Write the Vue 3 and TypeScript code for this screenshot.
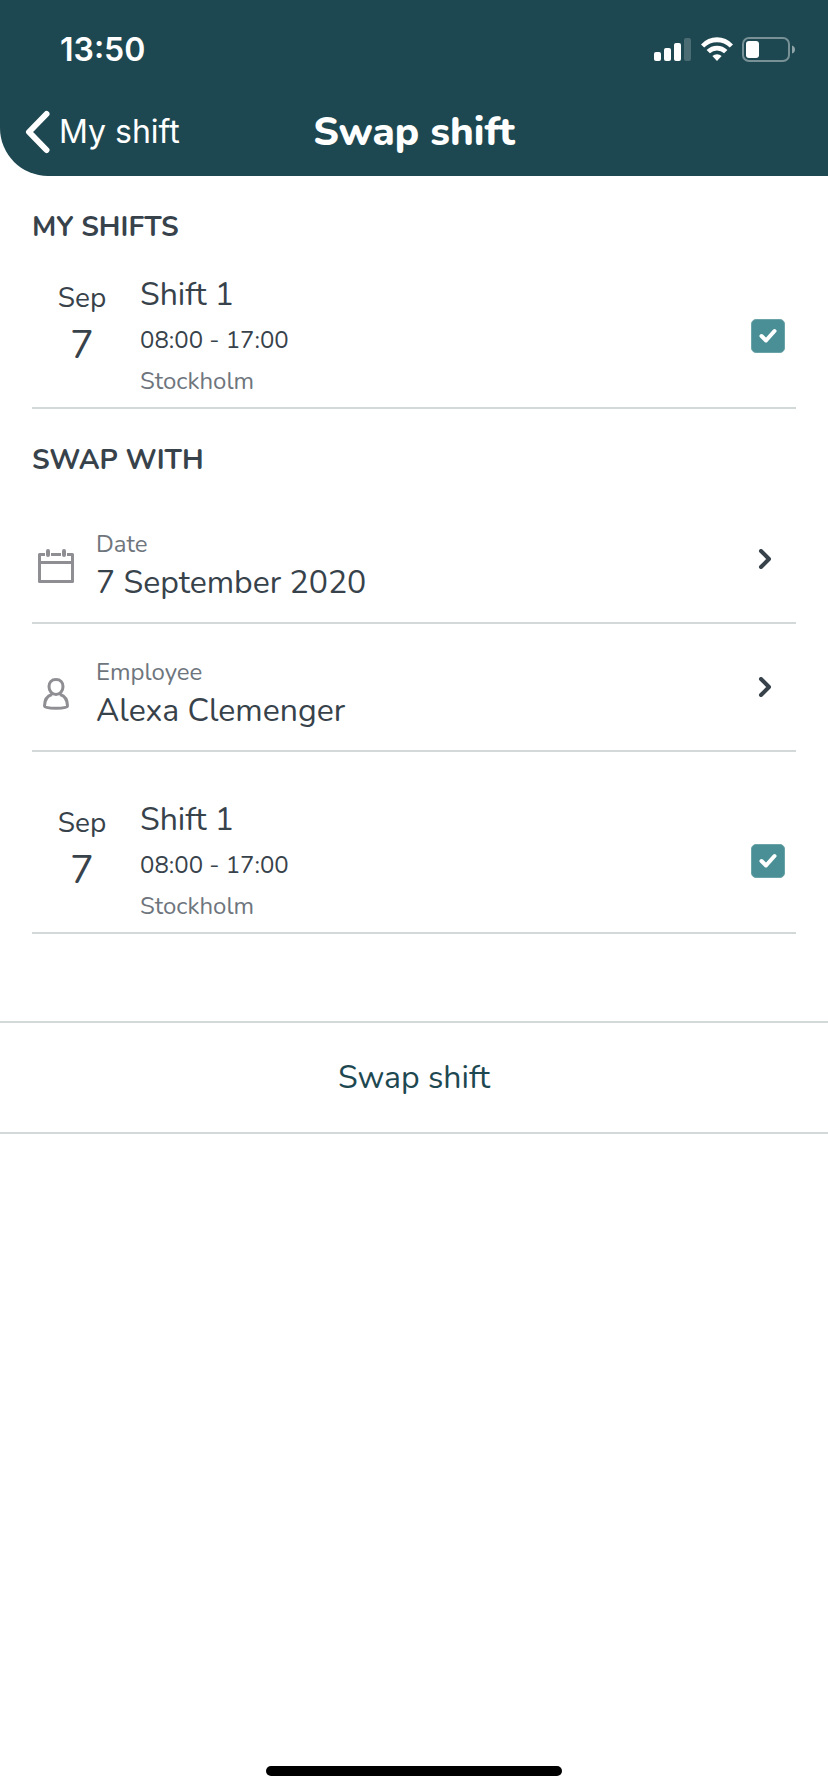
<script setup lang="ts">
import { reactive } from 'vue'

interface Shift {
  id: string
  month: string
  day: number
  title: string
  time: string
  place: string
  selected: boolean
}

interface Field {
  id: 'date' | 'employee'
  label: string
  value: string
}

const myShifts = reactive<Shift[]>([
  { id: 'mine-1', month: 'Sep', day: 7, title: 'Shift 1', time: '08:00 - 17:00', place: 'Stockholm', selected: true },
])

const otherShifts = reactive<Shift[]>([
  { id: 'other-1', month: 'Sep', day: 7, title: 'Shift 1', time: '08:00 - 17:00', place: 'Stockholm', selected: true },
])

const fields: Field[] = [
  { id: 'date', label: 'Date', value: '7 September 2020' },
  { id: 'employee', label: 'Employee', value: 'Alexa Clemenger' },
]
</script>

<template>
  <div class="screen">
    <header class="top">
      <div class="status">
        <span class="clock">13:50</span>
        <div class="indicators">
          <svg width="38" height="26" viewBox="0 0 38 26" fill="#fff" aria-hidden="true">
            <rect x="0" y="15" width="7" height="9" rx="2" />
            <rect x="10" y="11" width="7" height="13" rx="2" />
            <rect x="20" y="6" width="7" height="18" rx="2" />
            <rect x="30" y="1" width="7" height="23" rx="2" opacity="0.2" />
          </svg>
          <svg width="32" height="26" viewBox="0 0 32 26" fill="#fff" aria-hidden="true">
            <path d="M0 7.4Q6.8 0.3 16 0.3T32 7.4L28.8 10.6Q23.4 5.2 16 5.2T3.2 10.6Z" />
            <path d="M5.6 13.1Q10 8.8 16 8.8T26.4 13.1L23.1 16.3Q20 13.5 16 13.5T8.9 16.3Z" />
            <path d="M11.4 19Q13.3 17.2 16 17.2T20.6 19L16 24Z" />
          </svg>
          <svg width="54" height="26" viewBox="0 0 54 26" aria-hidden="true">
            <rect x="1" y="1" width="46" height="23" rx="6" fill="none" stroke="#fff" stroke-width="2" opacity="0.4" />
            <rect x="4" y="4" width="13" height="17" rx="3" fill="#fff" />
            <path d="M50 8.5Q53 9.5 53 12.5T50 16.5Z" fill="#fff" opacity="0.5" />
          </svg>
        </div>
      </div>
      <nav class="nav">
        <button class="back" type="button">
          <svg width="26" height="44" viewBox="0 0 26 44" fill="none" stroke="#fff" stroke-width="6" stroke-linecap="round" stroke-linejoin="round" aria-hidden="true">
            <path d="M22.5 4L5 22L22.5 40" />
          </svg>
          <span>My shift</span>
        </button>
        <h1 class="title">Swap shift</h1>
      </nav>
    </header>

    <main class="content">
      <section class="group">
        <h2 class="heading">MY SHIFTS</h2>
        <label v-for="shift in myShifts" :key="shift.id" class="shift" :for="shift.id">
          <span class="day">
            <span class="month">{{ shift.month }}</span>
            <span class="number">{{ shift.day }}</span>
          </span>
          <span class="details">
            <span class="name">{{ shift.title }}</span>
            <span class="line">{{ shift.time }}</span>
            <span class="line muted">{{ shift.place }}</span>
          </span>
          <span class="check">
            <input :id="shift.id" v-model="shift.selected" type="checkbox" />
            <svg viewBox="0 0 34 34" aria-hidden="true"><path d="M10.5 17L15 21.5L23.5 12" /></svg>
          </span>
        </label>
      </section>

      <section class="group">
        <h2 class="heading">SWAP WITH</h2>
        <div class="fields">
          <button v-for="field in fields" :key="field.id" class="field" type="button">
            <span class="field-main">
              <span class="field-icon">
                <svg v-if="field.id === 'date'" width="36" height="34" viewBox="0 0 36 34" fill="none" stroke="#8e8e93" stroke-width="3" stroke-linejoin="round" aria-hidden="true">
                  <path d="M7 5.5H1.5V32.5H34.5V5.5H29M13 5.5H23M1.5 13.5H34.5" />
                  <path d="M10 2V6M26 2V6" stroke-width="4" stroke-linecap="round" />
                </svg>
                <svg v-else width="26" height="32" viewBox="0 0 26 32" fill="none" stroke="#8e8e93" stroke-width="3" stroke-linejoin="round" aria-hidden="true">
                  <path d="M13 1.5C17.5 1.5 20 4.5 20 8.5C20 13 17 16.5 13 16.5S6 13 6 8.5C6 4.5 8.5 1.5 13 1.5Z" />
                  <path d="M9 16.5C4 18 1.5 22.5 1.5 28C1.5 29.5 6 30.3 13 30.3S24.5 29.5 24.5 28C24.5 22.5 22 18 17 16.5" />
                </svg>
              </span>
              <span class="field-text">
                <span class="field-label">{{ field.label }}</span>
                <span class="name">{{ field.value }}</span>
              </span>
            </span>
            <svg class="arrow" width="14" height="20" viewBox="0 0 14 20" fill="none" stroke="#37424b" stroke-width="4" stroke-linecap="round" stroke-linejoin="round" aria-hidden="true">
              <path d="M3 2L11 10L3 18" />
            </svg>
          </button>
        </div>
        <label v-for="shift in otherShifts" :key="shift.id" class="shift other" :for="shift.id">
          <span class="day">
            <span class="month">{{ shift.month }}</span>
            <span class="number">{{ shift.day }}</span>
          </span>
          <span class="details">
            <span class="name">{{ shift.title }}</span>
            <span class="line">{{ shift.time }}</span>
            <span class="line muted">{{ shift.place }}</span>
          </span>
          <span class="check">
            <input :id="shift.id" v-model="shift.selected" type="checkbox" />
            <svg viewBox="0 0 34 34" aria-hidden="true"><path d="M10.5 17L15 21.5L23.5 12" /></svg>
          </span>
        </label>
      </section>
    </main>

    <button class="submit" type="button">Swap shift</button>

    <footer class="home"><span class="home-bar"></span></footer>
  </div>
</template>

<style>
body {
  background: #fff;
}
</style>

<style scoped>
.screen {
  display: flex;
  flex-direction: column;
  min-height: 100vh;
  background: #fff;
  color: #37424b;
  font-family: Nunito, Lato, 'Open Sans', sans-serif;
}

button {
  border: 0;
  padding: 0;
  background: none;
  color: inherit;
  font: inherit;
  text-align: left;
  cursor: pointer;
}

svg {
  display: block;
}

.top {
  padding-bottom: 12px;
  background: #1e4851;
  color: #fff;
  border-bottom-left-radius: 48px;
}

.status {
  display: flex;
  align-items: center;
  justify-content: space-between;
  height: 100px;
  padding: 0 32px 0 60px;
}

.clock {
  font: 600 32px/40px Inter, sans-serif;
}

.indicators {
  display: flex;
  gap: 9px;
}

.nav {
  display: grid;
  grid-template-columns: 1fr auto 1fr;
  align-items: center;
  height: 64px;
  padding: 0 24px;
}

.back {
  display: flex;
  align-items: center;
  gap: 9px;
  height: 64px;
  font: 400 32px/40px Inter, sans-serif;
}

.title {
  margin: 0;
  font-size: 40px;
  line-height: 48px;
  font-weight: 800;
}

.content {
  padding: 0 32px;
}

.group {
  padding-top: 31px;
}

.heading {
  margin: 0;
  font-size: 28px;
  line-height: 40px;
  font-weight: 700;
}

.shift {
  display: flex;
  align-items: center;
  gap: 8px;
  padding: 22px 11px 5px 0;
  border-bottom: 2px solid #d3d8d8;
  cursor: pointer;
}

.other {
  margin-top: 20px;
}

.day {
  display: flex;
  flex-direction: column;
  align-items: center;
  align-self: flex-start;
  width: 100px;
  padding-top: 8px;
}

.month {
  font-size: 28px;
  line-height: 42px;
}

.number {
  font-size: 40px;
  line-height: 52px;
}

.details {
  display: flex;
  flex: 1;
  flex-direction: column;
  padding-top: 4px;
}

.name {
  font-size: 32px;
  line-height: 44px;
}

.line {
  font-size: 24px;
  line-height: 41px;
}

.details .name {
  margin-bottom: 3px;
}

.muted,
.field-label {
  color: #6e757d;
}

.check {
  display: grid;
  width: 34px;
  height: 34px;
}

.check input,
.check svg {
  grid-area: 1 / 1;
  width: 34px;
  height: 34px;
  margin: 0;
}

.check input {
  appearance: none;
  border: 1px solid #6aa3a8;
  border-radius: 5px;
  background: #fff;
}

.check input:checked {
  background: #4a8f96;
}

.check svg {
  fill: none;
  stroke: #fff;
  stroke-width: 4;
  stroke-linecap: round;
  stroke-linejoin: round;
  pointer-events: none;
}

.fields {
  padding-top: 16px;
}

.field {
  display: flex;
  align-items: center;
  justify-content: space-between;
  width: 100%;
  padding-right: 24px;
  border-bottom: 2px solid #d3d8d8;
}

.field-main {
  display: flex;
  align-items: center;
  gap: 16px;
  padding: 31px 0 17px;
}

.field-icon {
  display: flex;
  justify-content: center;
  width: 48px;
}

.field-text {
  display: flex;
  flex-direction: column;
}

.field-label {
  font-size: 24px;
  line-height: 34px;
}

.submit {
  margin-top: 87px;
  border-top: 2px solid #d3d8d8;
  border-bottom: 2px solid #d3d8d8;
  padding: 33px 0 32px;
  color: #1e4851;
  font-size: 32px;
  line-height: 44px;
  text-align: center;
}

.home {
  display: flex;
  justify-content: center;
  margin-top: auto;
  padding: 16px 0;
}

.home-bar {
  width: 296px;
  height: 10px;
  border-radius: 5px;
  background: #000;
}
</style>
